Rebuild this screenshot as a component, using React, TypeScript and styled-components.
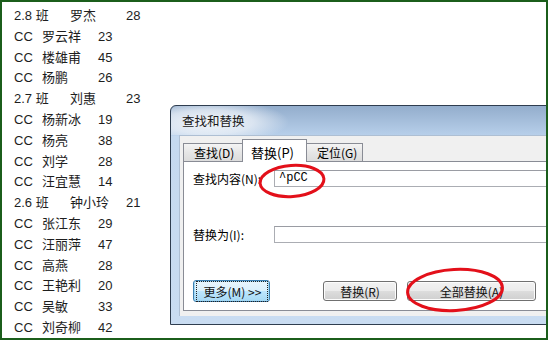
import React from "react";
import styled, { createGlobalStyle } from "styled-components";

const GlobalStyle = createGlobalStyle`
  * {
    margin: 0;
    padding: 0;
    box-sizing: border-box;
  }

  html, body {
    width: 548px;
    height: 340px;
    overflow: hidden;
    background: #ffffff;
    font-family: "Liberation Sans", "Noto Sans CJK SC", sans-serif;
  }
`;

const Frame = styled.div`
  position: relative;
  width: 548px;
  height: 340px;
  border: 2px solid #1b5e1b;
  background: #ffffff;
  overflow: hidden;
`;

const List = styled.div`
  padding: 4px 0 0 12px;
  color: #1e1e1e;
  font-size: 13px;
`;

const Row = styled.div<{ $group?: boolean }>`
  display: grid;
  grid-template-columns: ${(p) => (p.$group ? "56px 56px auto" : "28px 56px auto")};
  height: 20.8px;
  line-height: 20.8px;
  white-space: nowrap;
`;

const Dialog = styled.div`
  position: absolute;
  left: 168px;
  top: 103px;
  width: 400px;
  height: 220px;
  display: flex;
  flex-direction: column;
  border: 1px solid #2f3d4f;
  border-radius: 6px 6px 0 0;
  padding: 0 0 8px 8px;
  background: linear-gradient(#93adcc 0px, #b7cfea 29px, #c5d9ef 30px, #c9dcf1 100%);
  font-family: "Noto Sans CJK SC", "Liberation Sans", sans-serif;
  font-size: 12px;
  color: #000;
`;

const TitleBar = styled.div`
  height: 29px;
  margin-left: -8px;
  display: flex;
  align-items: center;
  padding-left: 11px;
  border-radius: 6px 0 0 0;
  background: radial-gradient(ellipse 80px 22px at 38px 55%, rgba(246, 248, 251, 0.95) 0%, rgba(240, 244, 249, 0.7) 55%, rgba(240, 244, 249, 0) 100%);
  font-size: 12.5px;
  color: #1a1a1a;
`;

const Body = styled.div`
  flex: 1;
  display: flex;
  flex-direction: column;
  background: #f0f0f0;
  border-top: 1px solid #aebfd3;
  border-left: 1px solid #aebfd3;
  padding: 0 0 5px 3px;
`;

const TabRow = styled.div`
  height: 25px;
  display: flex;
  align-items: flex-end;
  position: relative;
  z-index: 1;
`;

const Tab = styled.div<{ $active?: boolean; $w: number }>`
  width: ${(p) => p.$w}px;
  height: ${(p) => (p.$active ? 23 : 18)}px;
  margin-bottom: ${(p) => (p.$active ? -1 : 0)}px;
  margin-left: ${(p) => (p.$active ? -1 : 0)}px;
  margin-right: ${(p) => (p.$active ? -1 : 0)}px;
  position: relative;
  z-index: ${(p) => (p.$active ? 2 : 1)};
  display: flex;
  align-items: ${(p) => (p.$active ? "flex-start" : "center")};
  padding: ${(p) => (p.$active ? "3px 0 0 8px" : "0 0 0 10px")};
  border: 1px solid #898c95;
  border-bottom: none;
  background: ${(p) =>
    p.$active ? "#ffffff" : "linear-gradient(#f4f4f4, #e6e6e6 50%, #dcdcdc)"};
  font-size: ${(p) => (p.$active ? 13 : 12)}px;
`;

const Panel = styled.div`
  flex: 1;
  display: flex;
  flex-direction: column;
  background: #ffffff;
  border: 1px solid #898c95;
  border-right: none;
  padding: 8px 0 8px 9px;
`;

const Field = styled.div<{ $gap: number }>`
  display: flex;
  align-items: center;
  margin-top: ${(p) => p.$gap}px;
`;

const Label = styled.div`
  width: 81px;
  font-size: 12px;
  white-space: nowrap;
`;

const Input = styled.div<{ $h: number }>`
  flex: 1;
  height: ${(p) => p.$h}px;
  border: 1px solid #abadb3;
  border-top-color: #9a9ca3;
  background: #fff;
  padding-left: 4px;
  font-family: "Liberation Mono", monospace;
  font-size: 12px;
  line-height: ${(p) => p.$h - 2}px;
`;

const Buttons = styled.div`
  display: flex;
  align-items: center;
  margin-top: 37px;
`;

const Button = styled.div<{ $w: number; $focus?: boolean; $ml?: number }>`
  width: ${(p) => p.$w}px;
  height: ${(p) => (p.$focus ? 22 : 20)}px;
  flex-shrink: 0;
  margin-left: ${(p) => p.$ml ?? 0}px;
  display: flex;
  align-items: center;
  justify-content: center;
  border: 1px solid ${(p) => (p.$focus ? "#3c7fb1" : "#707070")};
  border-radius: 3px;
  background: ${(p) =>
    p.$focus
      ? "linear-gradient(#eaf6fd, #d9f0fc 50%, #bee6fd 51%, #a7d9f5)"
      : "linear-gradient(#f2f2f2, #ebebeb 50%, #dddddd 51%, #cfcfcf)"};
  box-shadow: ${(p) => (p.$focus ? "inset 0 0 0 1px #a2d8f4" : "inset 0 0 0 1px #fcfcfc")};
  font-size: 12px;
  white-space: nowrap;
  color: #111;
`;

const FocusText = styled.span`
  padding: 0 6px;
  outline: 1px dotted #222;
  outline-offset: 1px;
  width: 68px;
  text-align: center;
`;

const Mark = styled.svg<{ $x: number; $y: number }>`
  position: absolute;
  left: ${(p) => p.$x}px;
  top: ${(p) => p.$y}px;
  overflow: visible;
  z-index: 5;
`;

const rows: { g?: boolean; a: string; b: string; c: string }[] = [
  { g: true, a: "2.8 班", b: "罗杰", c: "28" },
  { a: "CC", b: "罗云祥", c: "23" },
  { a: "CC", b: "楼雄甫", c: "45" },
  { a: "CC", b: "杨鹏", c: "26" },
  { g: true, a: "2.7 班", b: "刘惠", c: "23" },
  { a: "CC", b: "杨新冰", c: "19" },
  { a: "CC", b: "杨亮", c: "38" },
  { a: "CC", b: "刘学", c: "28" },
  { a: "CC", b: "汪宜慧", c: "14" },
  { g: true, a: "2.6 班", b: "钟小玲", c: "21" },
  { a: "CC", b: "张江东", c: "29" },
  { a: "CC", b: "汪丽萍", c: "47" },
  { a: "CC", b: "高燕", c: "28" },
  { a: "CC", b: "王艳利", c: "20" },
  { a: "CC", b: "吴敏", c: "33" },
  { a: "CC", b: "刘奇柳", c: "42" },
];

export default function App() {
  return (
    <>
      <GlobalStyle />
      <Frame>
        <List>
          {rows.map((r, i) => (
            <Row key={i} $group={r.g}>
              <span>{r.a}</span>
              <span>{r.b}</span>
              <span>{r.c}</span>
            </Row>
          ))}
        </List>

        <Dialog>
          <TitleBar>查找和替换</TitleBar>
          <Body>
            <TabRow>
              <Tab $w={60}>查找(D)</Tab>
              <Tab $w={65} $active>替换(P)</Tab>
              <Tab $w={57}>定位(G)</Tab>
            </TabRow>
            <Panel>
              <Field $gap={0}>
                <Label>查找内容(N):</Label>
                <Input $h={17}>^pCC</Input>
              </Field>
              <Field $gap={39}>
                <Label>替换为(I):</Label>
                <Input $h={17} />
              </Field>
              <Buttons>
                <Button $w={77} $focus>
                  <FocusText>更多(M) &gt;&gt;</FocusText>
                </Button>
                <Button $w={74} $ml={53}>替换(R)</Button>
                <Button $w={129} $ml={10}>全部替换(A)</Button>
                <Button $w={80} $ml={10} />
              </Buttons>
            </Panel>
          </Body>
        </Dialog>

        <Mark $x={255} $y={160} width="70" height="38">
          <ellipse cx="35" cy="19" rx="32" ry="15.5" fill="none" stroke="#e3101a" strokeWidth="3" transform="rotate(-4 35 19)" />
        </Mark>
        <Mark $x={401} $y={263} width="104" height="50">
          <ellipse cx="52" cy="25" rx="47.5" ry="20.5" fill="none" stroke="#e3101a" strokeWidth="3" transform="rotate(-3 52 25)" />
        </Mark>
      </Frame>
    </>
  );
}
